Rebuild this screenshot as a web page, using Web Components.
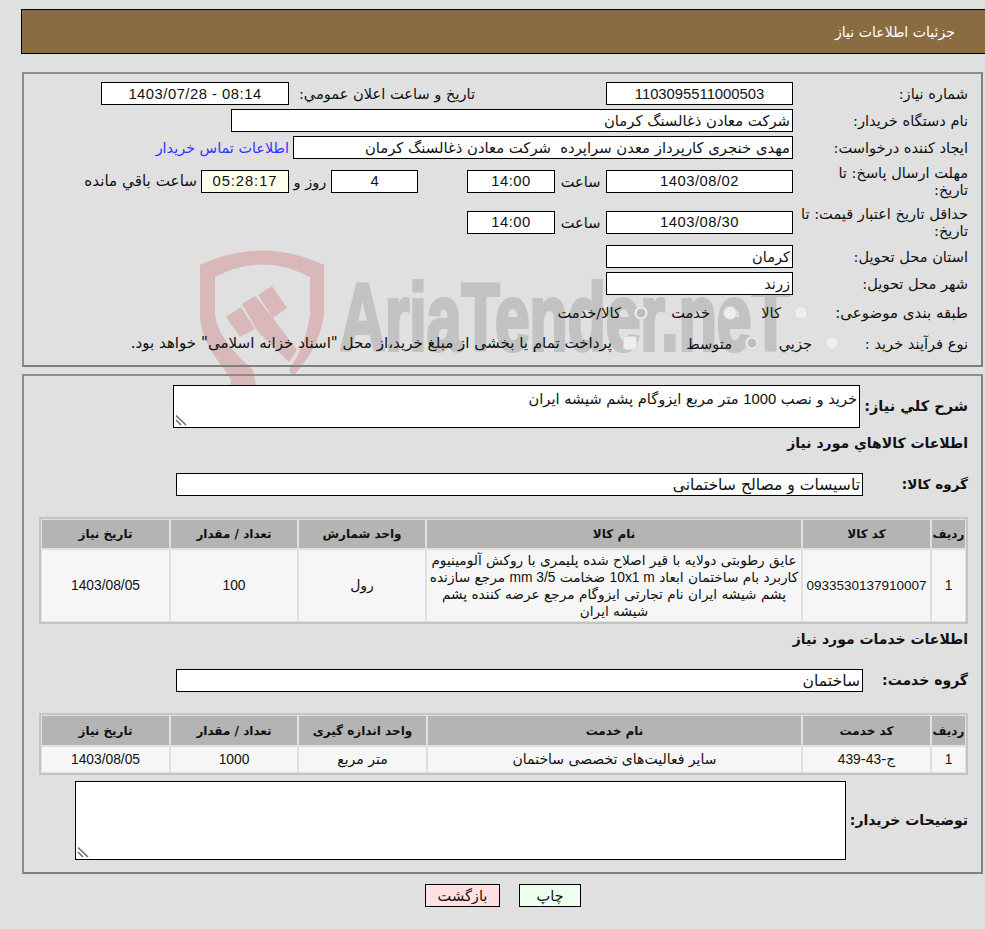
<!DOCTYPE html>
<html lang="fa" dir="rtl">
<head>
  <meta charset="UTF-8">
  <title>جزئیات اطلاعات نیاز</title>
  <style>
    html, body { margin: 0; background: #e0e0e0; overflow: hidden; }
    body { font: 14.6px "DejaVu Sans", sans-serif; color: #111; height: 929px; }
    .n { font-family: "Liberation Sans", sans-serif; font-size: 14.8px; }
    .d { letter-spacing: .5px; }
    t-d .n { font-size: 13.8px; letter-spacing: 0; }
    a { color: #3333ff; text-decoration: none; }
    #page { position: relative; margin-left: 21px; padding-top: 9px; }
    .b { font-weight: bold; font-size: 14px; }
  </style>
</head>
<body>
<template id="tp-header">
  <style>
    :host { display: block; height: 43px; border: 1px solid #000; border-right: 0; background: #8b6b42; color: #fff; }
    div { height: 43px; display: flex; align-items: center; padding-right: 30px; font-size: 14.1px; }
  </style>
  <div><slot></slot></div>
</template>
<template id="tp-panel">
  <style>
    :host { display: block; position: relative; z-index: 1; margin: 0 2px 0 1px; border: 2px solid #808080; border-top-color: #8c8c8c; border-left-color: #8c8c8c; padding: var(--pad, 8px 0 0); }
  </style>
  <slot></slot>
</template>
<template id="tp-row">
  <style>
    :host { display: flex; align-items: center; padding-right: 13px; margin-top: var(--mt, 4px); }
    .lab { flex: none; line-height: 17px; text-align: right; }
  </style>
  <div class="lab"><slot name="label"></slot></div>
  <slot></slot>
</template>
<template id="tp-field">
  <style>
    :host { display: flex; align-items: center; flex: none; box-sizing: border-box; height: 23px; border: 1px solid #000; background: #fff; padding: 0 2px; white-space: pre; overflow: hidden; justify-content: center; font-weight: normal; font-size: 14.6px; }
    :host([start]) { justify-content: flex-start; }
    :host([soft]) { background: #ffffee; }
  </style>
  <slot></slot>
</template>
<template id="tp-area">
  <style>
    :host { display: block; position: relative; flex: none; box-sizing: border-box; border: 1px solid #000; background: #fff; padding: 4px 2px; line-height: 17px; font-weight: normal; font-size: 14.6px; }
    svg { position: absolute; left: 1px; bottom: 1px; }
  </style>
  <slot></slot>
  <svg width="12" height="12" viewBox="0 0 12 12" fill="none" stroke="#6e6e6e" stroke-width="1.6"><path d="M1 1.500 L11 11M1 6 L6 11"/></svg>
</template>
<template id="tp-radio">
  <style>
    :host { display: flex; align-items: center; flex: none; white-space: nowrap; }
    i { display: block; box-sizing: border-box; width: 14px; height: 14px; border-radius: 50%; border: 1px solid #d8d8d8; background: #eeeeee; margin-left: 13px; flex: none; }
    :host([on]) i { background: radial-gradient(circle, #bcbcbc 0 4px, #eeeeee 4.8px); }
    :host([box]) i { border-radius: 3px; background: #eeeeee; margin-left: 11px; }
  </style>
  <i></i><slot></slot>
</template>
<template id="tp-table">
  <style>
    :host { display: grid; box-sizing: border-box; width: 929px; margin: var(--tm, 21px) 0 0; grid-template-columns: var(--cols); gap: 2px; padding: 1px; border: 2px solid #c4c4c4; }
  </style>
  <slot></slot>
</template>
<template id="tp-th">
  <style>
    :host { display: flex; align-items: center; justify-content: center; background: #b4b4b4; font-weight: bold; font-size: 12px; height: var(--hh, 28px); }
  </style>
  <slot></slot>
</template>
<template id="tp-td">
  <style>
    :host { display: flex; align-items: center; justify-content: center; text-align: center; background: #f6f6f6; font-size: 14px; line-height: 17px; height: var(--rh, 71px); box-sizing: border-box; }
  </style>
  <slot></slot>
</template>
<template id="tp-btn">
  <style>
    :host { display: flex; align-items: center; justify-content: center; box-sizing: border-box; height: 23px; border: 1px solid #000; background: #eeffee; }
    :host([back]) { background: #ffe0e0; }
  </style>
  <slot></slot>
</template>
<template id="tp-mark">
  <style>
    :host { display: block; position: absolute; left: 174px; top: 240px; z-index: 0; }
    svg { display: block; }
    text { font-family: "Liberation Sans", sans-serif; font-weight: bold; font-size: 95px; fill: #c2c2c2; stroke: #c2c2c2; stroke-width: 4; direction: ltr; }
  </style>
  <svg width="610" height="150" viewBox="195 240 610 150">
    <path fill="#d9b8b9" d="M200 265 Q262 236 324 265 L324 315 Q320 345 297 372 L293 376 L289 370 Q306 345 310 315 L310 277 Q262 252 215 277 L215 315 Q218 340 253 370 L257 390 L230 390 L231 380 L225 370 Q200 340 200 315Z"/>
    <g fill="#d9b8b9">
      <path d="M226 317 L241 307 L255 329 L240 337Z"/>
      <path d="M242 304 L255 296 L273 318 L258 332Z"/>
      <path d="M258 295 L272 286 L287 308 L273 318Z"/>
      <path d="M258 332 L273 318 L297 350 L289 362Z"/>
    </g>
    <text transform="translate(340 350) scale(.657 1)">AriaTender.neT</text>
  </svg>
</template>

<script>
  // هر کامپوننت یک تمپلیت دارد
  const make = (name, tid, after) => {
    customElements.define(name, class extends HTMLElement {
      constructor() {
        super()
        const shadow = this.attachShadow({mode: 'open'})
        shadow.appendChild(document.getElementById(tid).content.cloneNode(true))
      }
      connectedCallback() {
        if (this.hasAttribute('w')) this.style.width = this.getAttribute('w') + 'px'
        if (this.hasAttribute('h')) this.style.height = this.getAttribute('h') + 'px'
        if (this.hasAttribute('mr')) this.style.marginRight = this.getAttribute('mr') + 'px'
        if (after) after(this)
      }
    })
  }
  make('page-header', 'tp-header')
  make('form-panel', 'tp-panel')
  make('form-row', 'tp-row', el => {
    el.shadowRoot.querySelector('.lab').style.width = (el.getAttribute('lw') || 175) + 'px'
  })
  make('text-field', 'tp-field')
  make('text-area', 'tp-area')
  make('radio-opt', 'tp-radio')
  make('data-table', 'tp-table')
  make('t-h', 'tp-th')
  make('t-d', 'tp-td')
  make('action-btn', 'tp-btn')
  make('aria-mark', 'tp-mark')
</script>

<div id="page">
  <page-header>جزئیات اطلاعات نیاز</page-header>
  <aria-mark></aria-mark>

  <form-panel style="margin-top:18px;--pad:8px 0 9px;--mt:4px">
    <form-row h="23" style="margin-top:0">
      <span slot="label">شماره نیاز:</span>
      <text-field w="187" class="n">1103095511000503</text-field>
      <span style="width:186px;margin-right:131px;flex:none;white-space:nowrap">تاریخ و ساعت اعلان عمومي:</span>
      <text-field w="188" class="n d" dir="ltr">1403/07/28 - 08:14</text-field>
    </form-row>
    <form-row h="23">
      <span slot="label">نام دستگاه خریدار:</span>
      <text-field w="562" start style="font-size:14.8px">شرکت معادن ذغالسنگ کرمان</text-field>
    </form-row>
    <form-row h="23">
      <span slot="label">ایجاد کننده درخواست:</span>
      <text-field w="500" start style="font-size:14.8px">مهدی خنجری کارپرداز معدن سراپرده  شرکت معادن ذغالسنگ کرمان</text-field>
      <a href="#" style="margin-right:4px;font-size:14.4px">اطلاعات تماس خریدار</a>
    </form-row>
    <form-row h="36">
      <span slot="label">مهلت ارسال پاسخ: تا<br>تاریخ:</span>
      <text-field w="187" class="n d">1403/08/02</text-field>
      <span style="width:51px;text-align:center;flex:none">ساعت</span>
      <text-field w="88" class="n d">14:00</text-field>
      <text-field w="87" mr="49" class="n">4</text-field>
      <span style="width:42px;text-align:center;flex:none">روز و</span>
      <text-field w="88" soft class="n" style="letter-spacing:.9px">05:28:17</text-field>
      <span style="margin-right:4px;font-size:15.2px">ساعت باقي مانده</span>
    </form-row>
    <form-row h="38">
      <span slot="label">حداقل تاریخ اعتبار قیمت: تا<br>تاریخ:</span>
      <text-field w="187" class="n d">1403/08/30</text-field>
      <span style="width:51px;text-align:center;flex:none">ساعت</span>
      <text-field w="88" class="n d">14:00</text-field>
    </form-row>
    <form-row h="23">
      <span slot="label">استان محل تحویل:</span>
      <text-field w="187" start>کرمان</text-field>
    </form-row>
    <form-row h="23">
      <span slot="label">شهر محل تحویل:</span>
      <text-field w="187" start>زرند</text-field>
    </form-row>
    <form-row h="27" lw="160">
      <span slot="label" style="font-size:15px;white-space:nowrap">طبقه بندی موضوعی:</span>
      <radio-opt style="width:71px">کالا</radio-opt>
      <radio-opt style="width:89px">خدمت</radio-opt>
      <radio-opt on>کالا/خدمت</radio-opt>
    </form-row>
    <form-row h="26" lw="129">
      <span slot="label">نوع فرآیند خرید :</span>
      <radio-opt style="width:80px">جزيي</radio-opt>
      <radio-opt on style="width:122px">متوسط</radio-opt>
      <radio-opt box style="font-size:15.1px">پرداخت تمام یا بخشی از مبلغ خرید،از محل "اسناد خزانه اسلامی" خواهد بود.</radio-opt>
    </form-row>
  </form-panel>

  <form-panel style="margin-top:7px;--pad:9px 0 12px">
    <form-row class="b" lw="108" style="margin-top:0;font-size:14.5px">
      <span slot="label">شرح كلي نياز:</span>
      <text-area style="width:687px;height:43px">خريد و نصب <span class="n">1000</span> متر مربع ایزوگام پشم شیشه ایران</text-area>
    </form-row>
    <form-row class="b" h="22">
      <span slot="label" style="white-space:nowrap">اطلاعات كالاهاي مورد نياز</span>
    </form-row>
    <form-row class="b" lw="105" style="--mt:19px">
      <span slot="label" style="font-size:13.6px">گروه کالا:</span>
      <text-field w="687" start style="font-size:15.6px">تاسیسات و مصالح ساختمانی</text-field>
    </form-row>
    <div style="padding-right:13px">
      <data-table style="--cols:33px 127px 374px 126px 126px 127px">
        <t-h>ردیف</t-h><t-h>کد کالا</t-h><t-h>نام کالا</t-h><t-h>واحد شمارش</t-h><t-h>تعداد / مقدار</t-h><t-h>تاریخ نیاز</t-h>
        <t-d><span class="n">1</span></t-d><t-d><span class="n" style="font-size:13.5px">0933530137910007</span></t-d>
        <t-d style="font-size:13.700px"><span>عایق رطوبتی دولایه با قیر اصلاح شده پلیمری با روکش آلومینیوم<br>کاربرد بام ساختمان ابعاد <span class="n" dir="ltr">10x1 m</span> ضخامت <span class="n" dir="ltr">mm 3/5</span> مرجع سازنده<br>پشم شیشه ایران نام تجارتی ایزوگام مرجع عرضه کننده پشم<br>شیشه ایران</span></t-d>
        <t-d>رول</t-d><t-d><span class="n">100</span></t-d><t-d><span class="n">1403/08/05</span></t-d>
      </data-table>
    </div>
    <form-row class="b" h="22">
      <span slot="label" style="white-space:nowrap">اطلاعات خدمات مورد نیاز</span>
    </form-row>
    <form-row class="b" lw="105" style="--mt:19px">
      <span slot="label">گروه خدمت:</span>
      <text-field w="687" start style="font-size:15.6px">ساختمان</text-field>
    </form-row>
    <div style="padding-right:13px">
      <data-table style="--cols:33px 127px 373px 127px 126px 127px;--hh:29px;--rh:25px">
        <t-h>ردیف</t-h><t-h>کد خدمت</t-h><t-h>نام خدمت</t-h><t-h>واحد اندازه گیری</t-h><t-h>تعداد / مقدار</t-h><t-h>تاریخ نیاز</t-h>
        <t-d><span class="n">1</span></t-d><t-d><span>ج-<span class="n">43</span>-<span class="n">439</span></span></t-d><t-d>سایر فعالیت‌های تخصصی ساختمان</t-d><t-d>متر مربع</t-d><t-d><span class="n">1000</span></t-d><t-d><span class="n">1403/08/05</span></t-d>
      </data-table>
    </div>
    <form-row class="b" lw="122" style="--mt:6px">
      <span slot="label">توضیحات خریدار:</span>
      <text-area style="width:771px;height:79px"></text-area>
    </form-row>
  </form-panel>

  <div style="display:flex;justify-content:center;gap:19px;margin-top:10px;position:relative;z-index:1">
    <action-btn w="62">چاپ</action-btn>
    <action-btn w="75" back>بازگشت</action-btn>
  </div>
</div>
</body>
</html>
